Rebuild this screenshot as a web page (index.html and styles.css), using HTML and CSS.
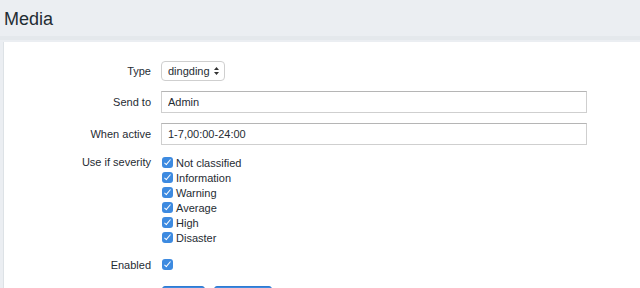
FILE: index.html
```html
<!DOCTYPE html>
<html lang="en">
<head>
  <meta charset="UTF-8" />
  <title>Media</title>
  <link rel="stylesheet" href="styles.css">
</head>
<body>
  <div class="header">
    <h1>Media</h1>
  </div>

  <div class="card">
    <form class="form">
      <div class="row">
        <label class="label">Type</label>
        <div class="field">
          <span class="select">dingding
            <svg class="arrows" width="5" height="8" viewBox="0 0 5 8">
              <path d="M2.5 0 L5 3 L0 3 Z M2.5 8 L5 5 L0 5 Z" fill="#333"/>
            </svg>
          </span>
        </div>
      </div>

      <div class="row">
        <label class="label">Send to</label>
        <div class="field">
          <input class="text" type="text" value="Admin" />
        </div>
      </div>

      <div class="row">
        <label class="label">When active</label>
        <div class="field">
          <input class="text" type="text" value="1-7,00:00-24:00" />
        </div>
      </div>

      <div class="row severity">
        <label class="label">Use if severity</label>
        <div class="field list">
          <div class="check"><span class="box"></span>Not classified</div>
          <div class="check"><span class="box"></span>Information</div>
          <div class="check"><span class="box"></span>Warning</div>
          <div class="check"><span class="box"></span>Average</div>
          <div class="check"><span class="box"></span>High</div>
          <div class="check"><span class="box"></span>Disaster</div>
        </div>
      </div>

      <div class="row enabled">
        <label class="label">Enabled</label>
        <div class="field">
          <div class="check"><span class="box"></span></div>
        </div>
      </div>

      <div class="row buttons">
        <span class="label"></span>
        <div class="field">
          <button type="button" class="btn">Add</button>
          <button type="button" class="btn">Cancel</button>
        </div>
      </div>
    </form>
  </div>
</body>
</html>
```

FILE: styles.css
```css
body {
  margin: 0;
  background: #ebeef2;
  font-family: "Liberation Sans", Arial, sans-serif;
  font-size: 11px;
  color: #1f2c33;
}
.header {
  height: 36px;
  padding-left: 4px;
  border-bottom: 4px solid #e4e8ec;
}
h1 {
  margin: 0;
  font-size: 18px;
  font-weight: normal;
  line-height: 38px;
}
.card {
  margin: 2px 0 0 3px;
  background: #fff;
  border-left: 1px solid #dde2e6;
  padding-top: 19px;
  height: 300px;
}
.row {
  display: flex;
  align-items: center;
  margin-bottom: 10px;
}
.label {
  width: 147px;
  padding-right: 10px;
  text-align: right;
  flex-shrink: 0;
}
.select {
  display: inline-flex;
  align-items: center;
  gap: 4px;
  height: 20px;
  padding: 0 5px 0 6px;
  border: 1px solid #cfcfcf;
  border-radius: 4px;
  box-sizing: border-box;
  font-size: 11px;
}
.text {
  width: 426px;
  height: 22px;
  box-sizing: border-box;
  border: 1px solid #cfcfcf;
  border-top-color: #b5b5b5;
  padding: 0 6px;
  font-family: inherit;
  font-size: 11px;
  color: #1f2c33;
  margin: 0;
}
.severity {
  align-items: flex-start;
}
.severity .label {
  padding-top: 1px;
}
.check {
  display: flex;
  align-items: center;
  height: 15px;
}
.box {
  width: 11px;
  height: 11px;
  border-radius: 3px;
  background: #3d8ae0;
  margin: 0 3px 0 1px;
  position: relative;
}
.box::after {
  content: "";
  position: absolute;
  left: 4px;
  top: 1px;
  width: 2px;
  height: 6px;
  border: solid #fff;
  border-width: 0 1.5px 1.5px 0;
  transform: rotate(40deg);
}
.enabled {
  margin-top: 12px;
}
.buttons {
  margin-top: 14px;
}
.btn {
  height: 22px;
  border: 1px solid #2f7ad1;
  border-radius: 3px;
  background: #3d8ae0;
  color: #fff;
  font-family: inherit;
  font-size: 11px;
  padding: 0 12px;
  margin-right: 6px;
}
.btn:first-child {
  margin-left: 1px;
  width: 43px;
}
.btn:last-child {
  width: 58px;
}
```
